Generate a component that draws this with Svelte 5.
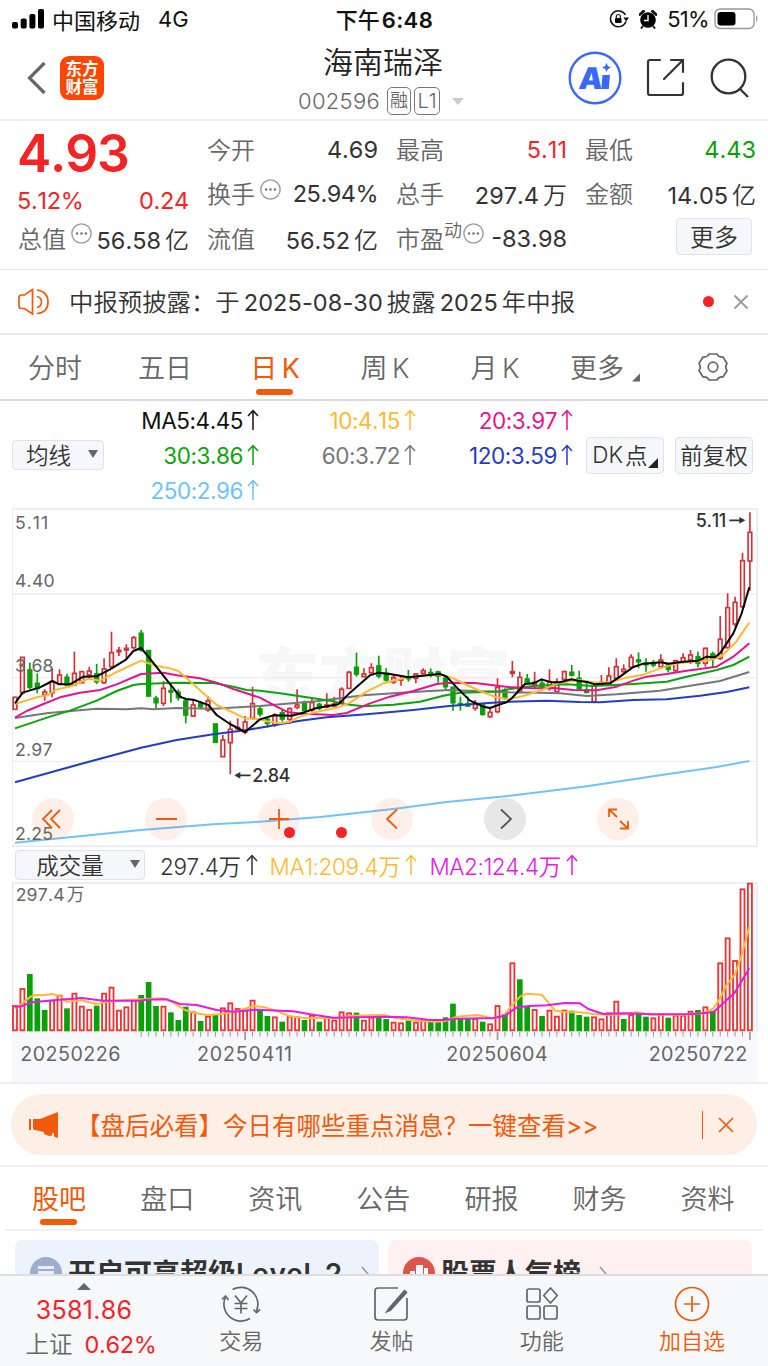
<script lang="ts">
	const periods = ['分时', '五日', '日 K', '周 K', '月 K', '更多'];
	const sections = ['股吧', '盘口', '资讯', '公告', '研报', '财务', '资料'];

	const averages = [
		{ text: 'MA5:4.45', color: '#111' },
		{ text: '10:4.15', color: '#ffb932' },
		{ text: '20:3.97', color: '#e6148c' },
		{ text: '30:3.86', color: '#0aa50a' },
		{ text: '60:3.72', color: '#777' },
		{ text: '120:3.59', color: '#233cc8' },
		{ text: '250:2.96', color: '#6ec3ff' }
	];

	// chart units are thirds of a pixel
	const STEP = 22.27;
	const cx = (i: number) => 45 + STEP * i;

	// [up, high, body top, body bottom, low]
	const candles = [
		[1, 590, 592, 628, 628], [1, 472, 472, 578, 585], [0, 488, 510, 562, 568], [0, 520, 550, 565, 580],
		[1, 568, 576, 585, 602], [1, 505, 545, 578, 592], [1, 508, 525, 552, 555], [0, 522, 532, 555, 558],
		[1, 455, 520, 555, 555], [1, 512, 515, 548, 550], [1, 500, 513, 525, 538], [0, 492, 522, 545, 552],
		[1, 475, 507, 548, 552], [1, 395, 458, 500, 502], [1, 440, 451, 455, 468], [1, 433, 445, 450, 478],
		[1, 408, 413, 443, 448], [0, 390, 400, 450, 455], [0, 452, 452, 588, 588], [0, 587, 595, 608, 625],
		[1, 543, 565, 610, 618], [0, 558, 572, 576, 608], [0, 568, 577, 593, 602], [0, 603, 603, 645, 670],
		[1, 600, 615, 648, 650], [0, 603, 610, 620, 628], [1, 588, 603, 630, 635], [0, 672, 672, 727, 727],
		[1, 705, 720, 770, 770], [1, 662, 688, 728, 823], [1, 655, 682, 686, 695], [1, 648, 666, 696, 703],
		[1, 560, 611, 655, 658], [0, 618, 627, 642, 650], [0, 652, 658, 670, 683], [1, 640, 645, 675, 680],
		[0, 630, 638, 657, 665], [1, 622, 626, 658, 672], [1, 568, 615, 622, 628], [0, 602, 607, 632, 640],
		[1, 597, 608, 630, 635], [0, 608, 613, 625, 630], [1, 580, 615, 621, 625], [1, 590, 612, 618, 625],
		[1, 562, 568, 608, 612], [1, 512, 517, 565, 565], [0, 458, 502, 522, 530], [1, 505, 522, 530, 532],
		[1, 490, 503, 518, 525], [0, 467, 498, 528, 535], [0, 505, 520, 540, 545], [1, 525, 533, 546, 552],
		[1, 530, 537, 540, 557], [0, 510, 533, 536, 545], [1, 520, 522, 535, 550], [1, 505, 512, 520, 525],
		[0, 505, 518, 522, 532], [0, 512, 516, 528, 548], [0, 525, 535, 560, 572], [0, 562, 562, 608, 632],
		[0, 590, 611, 614, 632], [0, 590, 612, 618, 620], [1, 600, 613, 625, 632], [0, 612, 615, 643, 647],
		[1, 622, 637, 650, 653], [1, 535, 562, 635, 640], [0, 565, 570, 595, 600], [1, 483, 515, 520, 532],
		[1, 515, 532, 575, 580], [0, 522, 537, 550, 552], [1, 515, 547, 553, 565], [0, 540, 550, 560, 572],
		[1, 508, 545, 562, 572], [1, 535, 548, 575, 577], [1, 512, 515, 538, 540], [0, 495, 517, 525, 530],
		[0, 512, 535, 566, 570], [0, 545, 570, 577, 580], [1, 555, 557, 605, 605], [1, 525, 547, 551, 555],
		[1, 502, 528, 548, 550], [1, 475, 500, 535, 538], [1, 493, 508, 515, 518], [1, 463, 472, 502, 505],
		[0, 457, 480, 485, 505], [0, 475, 490, 494, 515], [0, 480, 488, 495, 502], [1, 463, 480, 500, 502],
		[0, 488, 495, 508, 517], [1, 480, 482, 512, 515], [1, 460, 473, 485, 490], [1, 450, 465, 480, 492],
		[0, 455, 470, 490, 502], [1, 443, 445, 490, 500], [0, 455, 462, 475, 502], [1, 348, 418, 475, 480],
		[1, 280, 323, 443, 445], [1, 290, 307, 372, 380], [1, 158, 182, 320, 325], [1, 37, 97, 183, 272]
	];

	const maLines = [
		{ color: '#6ec3ff', points: '45,1028 423,990 640,973 780,965 960,951 1180,927 1340,906 1524,888 1750,860 2000,823 2150,801 2248,783' },
		{ color: '#233cc8', points: '45,847 250,790 423,743 530,720 640,703 735,691 780,683 900,662 980,652 1100,643 1240,630 1340,619 1420,612 1524,605 1640,602 1740,606 1800,607 1900,600 2000,598 2100,587 2180,576 2248,562' },
		{ color: '#777', points: '45,654 145,639 290,626 380,628 423,625 460,628 530,624 640,626 780,618 850,612 950,604 1090,586 1180,580 1290,573 1350,570 1420,573 1524,577 1620,578 1680,580 1760,588 1850,583 1980,572 2080,556 2160,543 2248,516' },
		{ color: '#0aa50a', points: '45,685 150,650 210,632 290,602 350,573 400,555 423,552 530,548 640,549 700,560 740,570 780,572 840,580 910,590 1000,604 1030,612 1090,619 1180,614 1260,605 1330,587 1380,578 1450,576 1500,574 1524,568 1600,558 1700,553 1780,558 1900,552 2000,545 2060,530 2150,510 2200,495 2248,470' },
		{ color: '#e6148c', points: '45,653 80,633 130,612 180,592 240,578 300,570 350,553 423,522 490,518 530,526 600,535 650,548 700,567 780,593 830,620 865,637 910,641 1000,645 1040,639 1110,610 1170,590 1240,573 1310,552 1350,548 1425,549 1480,556 1524,561 1600,565 1660,564 1720,570 1790,571 1850,560 1900,542 1940,530 2000,522 2060,512 2150,500 2200,470 2248,430' },
		{ color: '#ffb932', points: '45,612 110,592 145,585 165,570 215,558 265,536 300,542 350,516 423,482 470,498 510,505 535,513 560,535 610,580 650,615 700,638 735,655 775,658 800,664 840,670 870,665 900,650 950,635 990,628 1015,622 1050,608 1100,575 1150,550 1215,533 1280,524 1335,526 1360,535 1400,555 1440,573 1490,592 1525,598 1570,588 1620,572 1680,548 1735,540 1790,548 1830,547 1870,535 1930,524 1980,505 2030,490 2095,484 2130,480 2165,468 2205,430 2248,368' },
		{ color: '#000', points: '45,610 68,578 120,562 157,543 178,553 210,553 250,530 290,529 330,508 378,479 400,453 423,444 445,470 490,527 540,590 558,597 580,599 605,608 625,615 650,645 690,672 735,696 780,658 820,646 875,647 910,638 950,624 985,618 1015,613 1050,578 1110,526 1135,518 1170,522 1225,532 1290,525 1320,522 1340,530 1370,562 1410,602 1450,620 1470,624 1500,613 1520,607 1536,594 1575,552 1600,550 1625,538 1655,547 1680,547 1714,538 1735,542 1765,547 1785,553 1830,550 1860,530 1900,501 1930,491 1985,487 2005,491 2050,485 2095,482 2120,470 2145,472 2160,460 2200,400 2225,340 2248,262' }
	];

	// top edge of each bar, negative for a falling day
	const volumes = [
		483, 432, -387, -460, -495, 467, 452, -490, 446, 485, 495, -482, 446, 428, 497, 487, 467, -450, -411, -483,
		485, -502, -525, -485, 502, -528, 515, -507, 490, 475, 492, 497, 467, -495, -513, 517, -530, 515, 517, -525,
		512, -530, 520, 527, 502, 505, -503, 527, 518, -513, -522, 533, 535, -527, 533, 527, -530, -530, -517, -476,
		-520, -520, 522, -530, 538, 483, -507, 355, -403, -483, 495, -513, 497, 515, 497, -497, -510, -515, 517, 523,
		505, 470, -522, 510, -507, -515, 520, 508, -518, 512, 512, 500, -495, 487, -497, 355, 280, 348, 133, 116
	];

	const volLines = [
		{ color: '#ffb932', points: '45,490 65,477 90,456 105,450 130,451 155,447 180,453 200,470 245,466 290,478 310,472 345,467 395,464 440,462 490,460 515,470 555,495 580,503 620,510 660,508 715,498 760,483 795,487 830,498 870,514 920,520 980,518 1010,520 1050,512 1152,510 1190,520 1250,527 1310,530 1340,527 1370,515 1430,510 1460,515 1475,521 1510,513 1530,488 1560,455 1580,446 1625,449 1665,497 1700,502 1740,502 1780,507 1830,510 1880,506 1910,502 1950,509 2050,509 2110,505 2140,490 2160,460 2180,420 2205,388 2225,330 2248,245' },
		{ color: '#e619e6', points: '45,487 65,483 95,472 180,464 245,459 310,467 420,467 440,464 500,463 540,477 590,480 650,495 700,500 770,494 880,499 930,508 1000,518 1152,515 1220,517 1290,525 1330,525 1370,521 1480,519 1515,512 1550,487 1590,483 1640,481 1695,474 1740,475 1765,492 1810,507 1870,505 1960,508 2080,507 2140,502 2180,465 2203,445 2248,370' }
	];

	const ticks = Array.from({ length: 83 }, (_, i) => i + 17);
	const majorTicks = [31, 65, 99];

	const controls = [
		{ d: 'M20 12l-9 9 9 9M28 12l-9 9 9 9', grey: false },
		{ d: 'M11 21h21', grey: false },
		{ d: 'M11 21h20M21 11v20', grey: false },
		{ d: 'M26 11.500l-10 9.500 10 9.500', grey: false },
		{ d: 'M17 11.500l10 9.500-10 9.500', grey: true },
		{ d: 'M12 19v-7.500h8M12 11.500l8 7.500M31 23v7.500h-8M31 30.500l-8-7.500', grey: false }
	];
</script>

{#snippet dots()}
	<svg class="dots" viewBox="0 0 20 20">
		<circle cx="10" cy="10" r="9.200" fill="none" stroke="#999" stroke-width="1.300" />
		<circle cx="5.800" cy="10" r="1.200" /><circle cx="10" cy="10" r="1.200" /><circle cx="14.200" cy="10" r="1.200" />
	</svg>
{/snippet}

{#snippet up()}
	<svg class="up" viewBox="0 0 12 22"><path d="M6 21V2M1 7l5-5.500L11 7" fill="none" stroke="currentColor" stroke-width="1.500" /></svg>
{/snippet}

<div class="screen">
	<div class="status">
		<div class="carrier">
			<svg width="32" height="20" viewBox="0 0 32 20">
				<rect x="0" y="13" width="6" height="6.500" rx="1.800" /><rect x="8.700" y="9.500" width="6" height="10" rx="1.800" />
				<rect x="17.400" y="5" width="6" height="14.500" rx="1.800" /><rect x="26" y="0" width="6" height="19.500" rx="1.800" />
			</svg>
			<span>中国移动</span>
			<span class="net">4G</span>
		</div>
		<div class="time">下午 <b>6:48</b></div>
		<div class="battery">
			<svg width="20" height="18" viewBox="0 0 20 18">
				<path d="M16.500 5A8 8 0 1 0 17 11.500" fill="none" stroke="#111" stroke-width="1.500" />
				<path d="M14.500 7.500h5.500l-2.800 4z" />
				<rect x="6" y="8" width="6.500" height="5" rx=".8" /><path d="M7.300 8V6.500a2 2 0 0 1 4 0V8" fill="none" stroke="#111" stroke-width="1.200" />
			</svg>
			<svg width="18" height="19" viewBox="0 0 18 19">
				<circle cx="9" cy="10" r="7.800" />
				<path d="M1 4.500L4.500 1.200M17 4.500L13.500 1.200" stroke="#111" stroke-width="2.800" stroke-linecap="round" />
				<path d="M4 16l-2 2.500M14 16l2 2.500" stroke="#111" stroke-width="2" />
				<path d="M9 5v5.500H5" fill="none" stroke="#fff" stroke-width="1.400" />
			</svg>
			<span>51%</span>
			<svg width="45" height="22" viewBox="0 0 45 22">
				<rect x="1" y="1" width="39" height="19.500" rx="5" fill="none" stroke="#999" stroke-width="1.400" />
				<rect x="3.500" y="4" width="18" height="13.500" rx="3" /><path d="M42 7q3 3.700 0 7.500z" fill="#999" />
			</svg>
		</div>
	</div>

	<header>
		<div class="left">
			<svg width="20" height="34" viewBox="0 0 20 34"><path d="M18.500 2L3.500 17l15 15" fill="none" stroke="#666" stroke-width="3.200" /></svg>
			<div class="logo"><span>东方</span><span>财富</span></div>
		</div>
		<div class="stock">
			<h1>海南瑞泽</h1>
			<div class="code">
				<span>002596</span><em class="rong">融</em><em>L1</em><i></i>
			</div>
		</div>
		<div class="actions">
			<svg width="54" height="54" viewBox="0 0 54 54">
				<circle cx="27" cy="27" r="25.300" fill="#fff" stroke="#3a68ff" stroke-width="2.400" />
				<text x="14" y="38" class="ai" transform="skewX(-6)">A</text>
				<path d="M34.500 24h7.500l-1.200 14h-7.500zM38.500 12l1.400 3.100 3.100 1.400-3.100 1.400-1.400 3.100-1.400-3.100-3.100-1.400 3.100-1.400z" fill="#3a68ff" />
			</svg>
			<svg width="40" height="40" viewBox="0 0 40 40" fill="none" stroke="#333" stroke-width="2.200" stroke-linecap="round">
				<path d="M14 2H4Q2 2 2 4V35Q2 37 4 37H35Q37 37 37 35V25M37 14V2H25M37 2L18 21" />
			</svg>
			<svg width="40" height="40" viewBox="0 0 40 40" fill="none" stroke="#333" stroke-width="2.300">
				<circle cx="18.500" cy="18.500" r="16.800" /><path d="M30 31l8 8" />
			</svg>
		</div>
	</header>

	<section class="quote">
		<div class="price">
			<strong>4.93</strong>
			<div class="change"><span>5.12%</span><span>0.24</span></div>
		</div>
		<div class="cell"><label>今开</label><span>4.69</span></div>
		<div class="cell"><label>最高</label><span class="red">5.11</span></div>
		<div class="cell"><label>最低</label><span class="green">4.43</span></div>
		<div class="cell"><label>换手{@render dots()}</label><span class="tight">25.94%</span></div>
		<div class="cell"><label>总手</label><span>297.4<i>万</i></span></div>
		<div class="cell"><label>金额</label><span>14.05<i>亿</i></span></div>
		<div class="cell"><label>总值{@render dots()}</label><span>56.58<i>亿</i></span></div>
		<div class="cell"><label>流值</label><span>56.52<i>亿</i></span></div>
		<div class="cell"><label>市盈<sup>动</sup>{@render dots()}</label><span>-83.98</span></div>
		<div class="cell end"><button class="more">更多</button></div>
	</section>

	<section class="notice">
		<svg width="32" height="28" viewBox="0 0 32 28" fill="none" stroke="#f05a0a" stroke-width="1.700">
			<path d="M1 9.500Q1 7 3.500 7H6.500L14.500 1.500V26L6.500 20.500H3.500Q1 20.500 1 18zM19 8.500q4.500 1 4.500 5.500T19 19.500M19 2q11 1.500 11 12T19 25.500" />
		</svg>
		<p>中报预披露：于<b>2025-08-30</b>披露<b>2025</b>年中报</p>
		<span class="dot"></span>
		<svg width="16" height="16" viewBox="0 0 16 16"><path d="M1.500 1.500l13 13M14.500 1.500l-13 13" stroke="#999" stroke-width="1.800" /></svg>
	</section>

	<nav class="periods">
		{#each periods as p, i}
			<div class:active={i === 2}>
				<span>{p}</span>
				{#if i === 5}<svg class="corner" viewBox="0 0 8 8"><path d="M8 0v8H0z" fill="#666" /></svg>{/if}
			</div>
		{/each}
		<div class="gear">
			<svg width="32" height="30" viewBox="0 0 32 30" fill="none" stroke="#666" stroke-width="1.700" stroke-linejoin="round">
				<path d="M12 2H20Q21.500 5.500 26 5L30 11.500Q27.500 15 30 18.500L26 25Q21.500 24.500 20 28H12Q10.500 24.500 6 25L2 18.500Q4.500 15 2 11.500L6 5Q10.500 5.500 12 2z" />
				<circle cx="16" cy="15" r="4.800" />
			</svg>
		</div>
	</nav>

	<section class="legend">
		<button class="select">均线<i></i></button>
		<div class="ma">
			{#each averages as a}
				<span style="color: {a.color}">{a.text}{@render up()}</span>
			{/each}
		</div>
		<button class="dk">DK<span>点</span><svg class="corner" viewBox="0 0 8 8"><path d="M8 0v8H0z" fill="#222" /></svg></button>
		<button class="fq">前复权</button>
	</section>

	<section class="kline">
		<svg width="746" height="339" viewBox="36 24 2238 1017">
			<text x="766" y="602" class="watermark" textLength="764">东方财富</text>
			<g stroke="#ebedf2" stroke-width="4">
				<path d="M36 282H2272M36 533H2272M36 784H2272" />
				<rect x="36" y="27" width="2235" height="1012" fill="none" stroke="#e4e6ea" />
			</g>
			{#each candles as [rise, high, top, bottom, low], i}
				{#if rise}
					<g stroke="#d23237" stroke-width="5" fill="none">
						<path d="M{cx(i)} {high}V{top}M{cx(i)} {bottom}V{low}" />
						<rect x={cx(i) - 5.500} y={top} width="11" height={bottom - top} />
					</g>
				{:else}
					<g stroke="#0aa00a" stroke-width="5" fill="#0aa00a">
						<path d="M{cx(i)} {high}V{low}" />
						<rect x={cx(i) - 5.500} y={top} width="11" height={bottom - top} />
					</g>
				{/if}
			{/each}
			{#each maLines as l}
				<polyline points={l.points} fill="none" stroke={l.color} stroke-width="6" stroke-linejoin="round" />
			{/each}
			<g class="axis">
				<text x="45" y="88" textLength="100">5.11</text>
				<text x="45" y="261">4.40</text>
				<text x="45" y="515">3.68</text>
				<text x="45" y="767">2.97</text>
				<text x="45" y="1019">2.25</text>
			</g>
			<g class="mark">
				<text x="757" y="846" textLength="114">2.84</text>
				<text x="2087" y="80" textLength="92">5.11</text>
				<path d="M708 826H752M2188 61H2224" stroke="#333" stroke-width="5" />
				<path d="M703 826l18-10v20zM2236 61l-18-10v20z" />
			</g>
		</svg>
		<div class="controls">
			{#each controls as c}
				<svg class:grey={c.grey} width="42" height="42" viewBox="0 0 42 42"><path d={c.d} /></svg>
			{/each}
		</div>
		<span class="dot first"></span>
		<span class="dot second"></span>
	</section>

	<section class="vol-legend">
		<button class="select">成交量<i></i></button>
		<span>297.4万{@render up()}</span>
		<span class="m1">MA1:209.4万{@render up()}</span>
		<span class="m2">MA2:124.4万{@render up()}</span>
	</section>

	<section class="volume">
		<svg width="746" height="200" viewBox="36 111 2238 600">
			<rect x="36" y="560" width="2235" height="151" fill="#f7f8fb" />
			<path d="M38 560V114H2271V560" fill="none" stroke="#e4e6ea" stroke-width="4" />
			{#each volumes as v, i}
				{#if v > 0}
					<rect x={cx(i) - 6} y={v} width="12" height={556 - v} fill="#fff" stroke="#f03232" stroke-width="5.500" />
				{:else}
					<rect x={cx(i) - 8.500} y={-v} width="17" height={559 + v} fill="#0aa00a" />
				{/if}
			{/each}
			{#each volLines as l}
				<polyline points={l.points} fill="none" stroke={l.color} stroke-width="6" stroke-linejoin="round" />
			{/each}
			{#each ticks as t}
				<path d="M{cx(t)} 561V{majorTicks.includes(t) ? 585 : 575}" stroke="#999" stroke-width={majorTicks.includes(t) ? 5 : 3} />
			{/each}
			<g class="axis">
				<text x="47" y="168">297.4<tspan dx="6">万</tspan></text>
				<g class="dates">
					<text x="61" y="647" textLength="300">20250226</text>
					<text x="591" y="647" textLength="285">20250411</text>
					<text x="1339" y="647" textLength="304">20250604</text>
					<text x="1946" y="647" textLength="296">20250722</text>
				</g>
			</g>
		</svg>
	</section>

	<section class="banner">
		<div class="pill">
			<svg width="30" height="28" viewBox="0 0 30 28">
				<path d="M0 8h2v11H0zM4 8L11 8 29 1V27L25 25.500V22.500L23 22V24.500L20 25 15 23V21L4 18.500z" fill="#f05a0a" />
			</svg>
			<p>【盘后必看】今日有哪些重点消息？一键查看&gt;&gt;</p>
			<span class="bar"></span>
			<svg width="16" height="16" viewBox="0 0 16 16"><path d="M1 1l14 14M15 1L1 15" stroke="#f05a0a" stroke-width="1.700" /></svg>
		</div>
	</section>

	<nav class="sections">
		{#each sections as s, i}
			<div class:active={i === 0}><span>{s}</span></div>
		{/each}
	</nav>

	<section class="cards">
		<div class="card blue">
			<svg width="32" height="32" viewBox="0 0 32 32"><circle cx="16" cy="16" r="16" fill="#9eadcd" /><path d="M8 9h16v3H8zM8 14h16v12H8z" fill="#e9eef8" /></svg>
			<b>开启可享超级<span>Level-2</span></b>
			<svg width="8" height="16" viewBox="0 0 8 16"><path d="M1 1l6 7-6 7" fill="none" stroke="#999" stroke-width="1.600" /></svg>
		</div>
		<div class="card pink">
			<svg width="32" height="32" viewBox="0 0 32 32"><circle cx="16" cy="16" r="16" fill="#e0544f" /><path d="M7 14h5v12H7zM13 8h7v18h-7zM21 11h4v15h-4z" fill="#fff" /></svg>
			<b>股票人气榜</b>
			<svg width="8" height="16" viewBox="0 0 8 16"><path d="M1 1l6 7-6 7" fill="none" stroke="#999" stroke-width="1.600" /></svg>
		</div>
	</section>

	<footer>
		<div class="index">
			<svg width="14" height="7" viewBox="0 0 14 7"><path d="M7 0l7 7H0z" fill="#666" /></svg>
			<span class="points">3581.86</span>
			<div><label>上证</label><span>0.62%</span></div>
		</div>
		<div class="tab">
			<svg viewBox="0 0 40 36">
				<path d="M11.500 3.500A17 17 0 0 1 35.500 25M29 32.500A17 17 0 0 1 4.500 11" />
				<path d="M1 13.500l3.500-3.500 3 4M39 23.500l-3.500 3-3-3M14 9.500l6 7.500 6-7.500M20 17v10.500M13.500 17.500h13M13.500 22.500h13" />
			</svg>
			<span>交易</span>
		</div>
		<div class="tab">
			<svg viewBox="0 0 40 36">
				<path d="M27 2H7Q4 2 4 5V31Q4 34 7 34H33Q36 34 36 31V12" />
				<path d="M34 4L18 22.500l-2 3 3.500-1.500L36 6" fill="#666" />
			</svg>
			<span>发帖</span>
		</div>
		<div class="tab">
			<svg viewBox="0 0 40 36">
				<rect x="5" y="3" width="13" height="13" rx="2" /><rect x="5" y="20" width="13" height="13" rx="2" /><rect x="22" y="20" width="13" height="13" rx="2" />
				<path d="M28.500 2l6.800 7.500-6.800 7.500-6.800-7.500z" stroke-linejoin="round" />
			</svg>
			<span>功能</span>
		</div>
		<div class="tab add">
			<svg viewBox="0 0 40 36"><circle cx="20" cy="18" r="16.500" /><path d="M20 10v16M12 18h16" /></svg>
			<span>加自选</span>
		</div>
	</footer>
</div>

<style>
	:global(body) {
		background: #fff;
	}

	.screen {
		width: 768px;
		height: 1366px;
		overflow: hidden;
		background: #fff;
		color: #333;
		font-family: Inter, 'Noto Sans CJK SC', sans-serif;
		font-weight: 350;
		font-size: 24px;
		font-kerning: none;
	}

	.screen * {
		box-sizing: border-box;
	}

	svg {
		display: block;
		flex-shrink: 0;
	}

	i,
	em {
		font-style: normal;
	}

	p,
	h1 {
		margin: 0;
	}

	button {
		font: inherit;
		color: #333;
		background: #f6f7fa;
		border: 1px solid #dfe2e8;
		border-radius: 4px;
		padding: 0 0 2px;
		display: flex;
		align-items: center;
		justify-content: center;
		white-space: nowrap;
	}

	.status {
		height: 40px;
		display: grid;
		grid-template-columns: 1fr auto 1fr;
		align-items: center;
		padding: 0 9px 2px 12px;
		color: #111;
		font-size: 22px;
		font-weight: 400;
	}

	.carrier,
	.battery {
		display: flex;
		align-items: center;
	}

	.carrier {
		gap: 8px;
	}

	.time {
		position: relative;
		top: -1px;
		left: -1px;
		font-weight: 500;
	}

	.net {
		margin-left: 10px;
	}

	.time b {
		font-weight: 600;
		margin-left: -4px;
		letter-spacing: 0.4px;
	}

	.battery {
		justify-content: flex-end;
		gap: 10px;
	}

	.battery span {
		letter-spacing: -0.7px;
		margin-right: -5px;
	}

	header {
		height: 81px;
		border-bottom: 2px solid #eee;
		display: grid;
		grid-template-columns: 1fr 168px 1fr;
		align-items: center;
		padding: 0 18px 3px 26px;
	}

	.left,
	.actions {
		display: flex;
		align-items: center;
	}

	.left {
		gap: 14px;
	}

	.logo {
		width: 44px;
		height: 44px;
		border-radius: 9px;
		background: #ff4600;
		color: #fff;
		font-size: 16.5px;
		font-weight: 700;
		line-height: 18px;
		display: flex;
		flex-direction: column;
		align-items: center;
		justify-content: center;
	}

	.stock {
		text-align: center;
		margin: 3px 6px 0 -6px;
	}

	h1 {
		font-size: 30px;
		line-height: 39px;
		font-weight: 350;
		color: #222;
		padding-left: 2px;
		white-space: nowrap;
	}

	.code {
		height: 34px;
		display: flex;
		align-items: center;
		font-size: 22px;
		color: #666;
		gap: 3px;
		padding-top: 4px;
	}

	.code span {
		margin-right: 4px;
		letter-spacing: 0.3px;
	}

	.code em {
		width: 26px;
		height: 28px;
		border: 1px solid #777;
		border-radius: 5px;
		font-size: 20px;
		line-height: 26px;
		text-align: center;
		flex-shrink: 0;
	}

	.code .rong {
		width: 24px;
		font-size: 18px;
		line-height: 25px;
	}

	.code i {
		border: 6.5px solid transparent;
		border-top: 7px solid #ccc;
		border-bottom: 0;
		margin-left: 9px;
	}

	.actions {
		justify-content: flex-end;
		gap: 24px;
	}

	.ai {
		font-size: 30px;
		font-weight: 900;
		fill: #3a68ff;
	}

	.quote {
		height: 149px;
		border-bottom: 1px solid #e6e6e6;
		display: grid;
		grid-template-columns: repeat(4, 171px);
		grid-template-rows: repeat(3, 44.5px);
		column-gap: 18px;
		padding: 6px 0 0 18px;
	}

	.price {
		grid-row: span 2;
		color: #f52323;
	}

	.price strong {
		display: block;
		font-size: 51.5px;
		line-height: 53px;
		font-weight: 600;
		margin-left: -1px;
		letter-spacing: -1.2px;
	}

	.change {
		display: flex;
		justify-content: space-between;
		line-height: 42px;
		font-weight: 400;
		font-size: 23.5px;
		margin-left: -1px;
		letter-spacing: -0.3px;
	}

	.cell {
		display: flex;
		justify-content: space-between;
		align-items: center;
		white-space: nowrap;
	}

	.cell label {
		color: #666;
		display: flex;
		align-items: center;
		position: relative;
		top: -1px;
	}

	.cell span {
		font-weight: 400;
		font-size: 23.5px;
		letter-spacing: 0;
	}

	.cell .tight {
		letter-spacing: -0.5px;
	}

	.cell span i {
		font-weight: 350;
		font-size: 24px;
		margin-left: 4px;
	}

	.cell .red {
		color: #f52323;
	}

	.cell .green {
		color: #0aa00a;
	}

	.dots {
		width: 21px;
		height: 21px;
		margin: -7px 0 0 5px;
		fill: #777;
	}

	sup {
		font-size: 18px;
		line-height: 18px;
		margin: -13px -4px 0 0;
	}

	.end {
		justify-content: flex-end;
	}

	.more {
		width: 76px;
		height: 37px;
		margin: -4px 4px 0 0;
	}

	.notice {
		height: 65px;
		border-bottom: 2px solid #ebebeb;
		display: flex;
		align-items: center;
		padding: 0 19px 0 18px;
	}

	.notice p {
		flex: 1;
		margin-left: 19px;
		padding-bottom: 3px;
		font-size: 24.4px;
	}

	.notice b {
		font-weight: 400;
		font-size: 23.5px;
		margin: 0 4px;
		letter-spacing: 0.1px;
	}

	.dot {
		width: 11px;
		height: 11px;
		border-radius: 50%;
		background: #f52323;
	}

	.notice .dot {
		margin-right: 19px;
	}

	.periods {
		height: 66px;
		border-bottom: 2px solid #d8d9dc;
		display: grid;
		grid-template-columns: repeat(6, 110px) 106px;
		font-size: 27px;
		color: #666;
	}

	.periods div,
	.sections div {
		display: flex;
		align-items: center;
		justify-content: center;
		position: relative;
	}

	.periods span,
	.sections span {
		word-spacing: -3px;
		padding-bottom: 1px;
	}

	.corner {
		width: 8px;
		height: 9px;
		margin: 20px 0 0 8px;
	}

	.active {
		color: #f05a0a;
		font-weight: 400;
	}

	.active::after {
		content: '';
		position: absolute;
		bottom: 4px;
		left: 50%;
		width: 37px;
		height: 6px;
		margin-left: -19px;
		border-radius: 3px;
		background: #f05a0a;
	}

	.legend {
		height: 107px;
		display: flex;
		align-items: center;
		padding: 1px 0 0 12px;
		font-size: 22.5px;
	}

	.select {
		width: 92px;
		height: 30px;
		padding-left: 8px;
	}

	.select i {
		border: 5px solid transparent;
		border-top: 8px solid #666;
		border-bottom: 0;
		margin-left: 17px;
	}

	.ma {
		display: grid;
		grid-template-columns: 155px 157px 157px;
		grid-auto-rows: 35px;
		margin-right: 2px;
		font-weight: 400;
		letter-spacing: -0.45px;
	}

	.ma span {
		display: flex;
		align-items: center;
		justify-content: flex-end;
		gap: 4px;
	}

	.up {
		width: 12px;
		height: 22px;
	}

	.dk,
	.fq {
		width: 78px;
		height: 37px;
		margin-left: 11px;
	}

	.dk .corner {
		width: 10px;
		height: 10px;
		margin: 18px 0 0 0;
	}

	.dk span {
		margin-left: 2px;
	}

	.kline {
		position: relative;
		height: 339px;
		padding-left: 12px;
	}

	.watermark {
		font-size: 192px;
		font-weight: 900;
		fill: #f7f7f8;
	}

	.axis {
		font-size: 53px;
		font-weight: 400;
		fill: #666;
		letter-spacing: 0.6px;
	}

	.dates {
		font-size: 59px;
		letter-spacing: 0;
	}

	.mark {
		font-size: 54px;
		font-weight: 500;
		fill: #333;
	}

	.controls {
		position: absolute;
		left: 32px;
		top: 290px;
		display: flex;
		gap: 71px;
	}

	.controls svg {
		border-radius: 50%;
		background: rgba(240, 90, 10, 0.09);
		fill: none;
		stroke: #f05a0a;
		stroke-width: 1.8;
	}

	.controls .grey {
		background: rgba(60, 60, 60, 0.12);
		stroke: #555;
	}

	.first,
	.second {
		position: absolute;
		left: 284px;
		top: 319px;
	}

	.second {
		left: 336px;
	}

	.vol-legend {
		height: 35px;
		display: flex;
		align-items: center;
		padding: 1px 0 0 15px;
		font-size: 22.5px;
	}

	.vol-legend .select {
		width: 130px;
		margin-right: 15px;
		padding-left: 16px;
	}

	.vol-legend .select i {
		margin-left: 26px;
	}

	.vol-legend span {
		display: flex;
		align-items: center;
		gap: 5px;
		margin-right: 12px;
		padding-bottom: 1px;
		letter-spacing: -0.4px;
	}

	.vol-legend .m1 {
		color: #ffb932;
	}

	.vol-legend .m2 {
		color: #e619e6;
	}

	.volume {
		height: 202px;
		padding-left: 12px;
		border-bottom: 2px solid #efeff1;
	}

	.banner {
		height: 83px;
		padding: 10px 11px 0;
		border-bottom: 2px solid #efefef;
	}

	.pill {
		height: 61px;
		border-radius: 31px;
		background: #fdeee6;
		color: #f05a0a;
		display: flex;
		align-items: center;
		padding: 0 23px 0 18px;
	}

	.pill p {
		flex: 1;
		margin-left: 17px;
		padding-bottom: 1px;
		font-size: 24.5px;
		font-weight: 400;
		white-space: nowrap;
	}

	.bar {
		width: 1.5px;
		height: 28px;
		background: #f05a0a;
		margin-right: 15px;
	}

	.sections {
		height: 64px;
		margin: 0 5px;
		border-bottom: 2px solid #f0f0f0;
		display: grid;
		grid-template-columns: repeat(7, 108.1px);
		font-size: 27px;
		color: #666;
	}

	.cards {
		height: 43px;
		padding: 9px 15px 0;
		overflow: hidden;
		display: flex;
		gap: 9px;
	}

	.card {
		width: 364px;
		height: 80px;
		border-radius: 8px;
		display: flex;
		align-items: flex-start;
		padding: 17px 0 0 15px;
	}

	.card b {
		font-size: 28px;
		line-height: 34px;
		font-weight: 700;
		margin: 0 18px 0 6px;
		white-space: nowrap;
	}

	.card b span {
		font-weight: 600;
		letter-spacing: 0.5px;
	}

	.card svg:last-child {
		margin-top: 9px;
	}

	.blue {
		background: #edf3fd;
	}

	.pink {
		background: #fff1f1;
	}

	footer {
		height: 92px;
		border-top: 2px solid #dcdee2;
		background: #f7f8fa;
		display: grid;
		grid-template-columns: 166px repeat(4, 150.3px);
	}

	.index {
		display: flex;
		flex-direction: column;
		align-items: center;
		padding: 7px 0 0 2px;
		color: #f52323;
		font-weight: 400;
		font-size: 23.5px;
		letter-spacing: -0.3px;
	}

	.points {
		line-height: 40px;
		font-size: 25px;
		letter-spacing: 0.3px;
	}

	.index div {
		line-height: 29px;
		white-space: nowrap;
		margin-left: 14px;
	}

	.index label {
		color: #666;
		font-weight: 350;
		margin-right: 12px;
		letter-spacing: 0;
	}

	.tab {
		display: flex;
		flex-direction: column;
		align-items: center;
		padding-top: 10px;
		color: #666;
		font-size: 22px;
	}

	.tab svg {
		width: 40px;
		height: 36px;
		fill: none;
		stroke: currentColor;
		stroke-width: 1.7;
	}

	.tab span {
		line-height: 39px;
	}

	.add {
		color: #f05a0a;
	}
</style>
